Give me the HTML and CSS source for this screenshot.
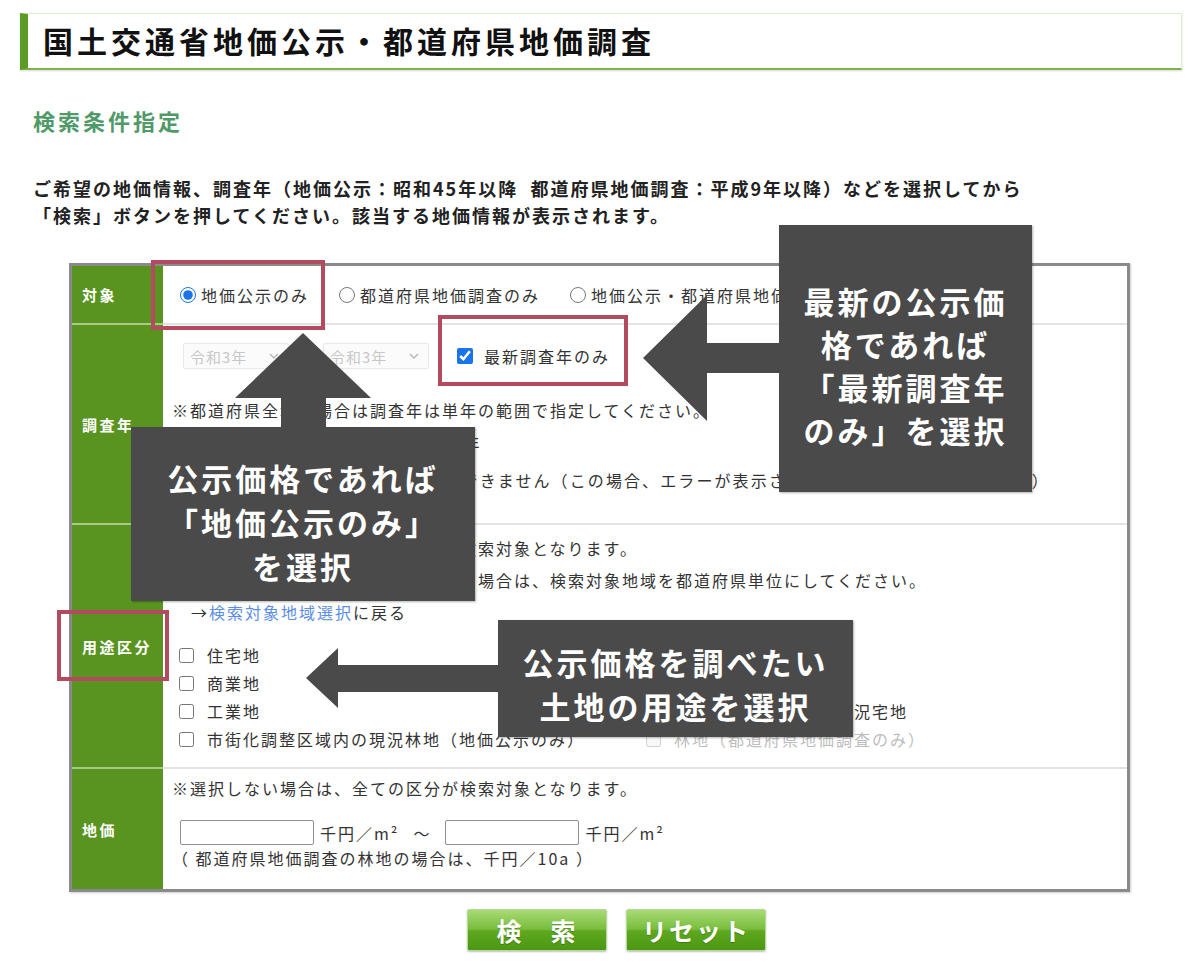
FILE: index.html
```html
<!DOCTYPE html>
<html lang="ja">
<head>
  <meta charset="UTF-8">
  <meta name="viewport" content="width=device-width, initial-scale=1.0">
  <title>国土交通省地価公示・都道府県地価調査</title>
  <link rel="stylesheet" href="styles.css">
</head>
<body>
<div class="page">
  <h1 class="page-title">国土交通省地価公示・都道府県地価調査</h1>
  <h2 class="section-title">検索条件指定</h2>
  <p class="lead">ご希望の地価情報、調査年（地価公示：昭和45年以降&nbsp; 都道府県地価調査：平成9年以降）などを選択してから<br>「検索」ボタンを押してください。該当する地価情報が表示されます。</p>

  <div class="search-table">
    <div class="row row-target">
      <div class="row-head">対象</div>
      <div class="row-body choices">
        <label class="choice"><input type="radio" name="target" checked>地価公示のみ</label>
        <label class="choice"><input type="radio" name="target">都道府県地価調査のみ</label>
        <label class="choice"><input type="radio" name="target">地価公示・都道府県地価調査</label>
      </div>
    </div>

    <div class="row row-year">
      <div class="row-head">調査年</div>
      <div class="row-body">
        <div class="year-line">
          <div class="select-wrap">
            <select disabled><option>令和3年</option></select>
            <svg class="chev" viewBox="0 0 10 6"><path d="M1 1l4 4 4-4" fill="none" stroke="#b5b5b5" stroke-width="1.4"/></svg>
          </div>
          <span class="tilde">～</span>
          <div class="select-wrap">
            <select disabled><option>令和3年</option></select>
            <svg class="chev" viewBox="0 0 10 6"><path d="M1 1l4 4 4-4" fill="none" stroke="#b5b5b5" stroke-width="1.4"/></svg>
          </div>
          <label class="latest"><input type="checkbox" checked>最新調査年のみ</label>
        </div>
        <p class="note note-first">※都道府県全域の場合は調査年は単年の範囲で指定してください。</p>
        <p class="note">※範囲で指定できる期間は最大で10年</p>
        <p class="note note-last">※林地は他の用途区分と同時に選択できません（この場合、エラーが表示され検索結果は出力されません。）</p>
      </div>
    </div>

    <div class="row row-use">
      <div class="row-head">用途区分</div>
      <div class="row-body">
        <p class="note note-top">※選択しない場合は、全ての区分が検索対象となります。</p>
        <p class="note">※用途区分のみで絞り込みを行いたい場合は、検索対象地域を都道府県単位にしてください。</p>
        <p class="note back-link">→<a href="#">検索対象地域選択</a>に戻る</p>
        <div class="use-list">
          <label class="use"><input type="checkbox">住宅地</label>
          <label class="use"><input type="checkbox">宅地見込地</label>
          <label class="use"><input type="checkbox">商業地</label>
          <label class="use"><input type="checkbox">準工業地</label>
          <label class="use"><input type="checkbox">工業地</label>
          <label class="use"><input type="checkbox">市街化調整区域内の現況宅地</label>
          <label class="use"><input type="checkbox">市街化調整区域内の現況林地（地価公示のみ）</label>
          <label class="use use-disabled"><input type="checkbox" disabled>林地（都道府県地価調査のみ）</label>
        </div>
      </div>
    </div>

    <div class="row row-price">
      <div class="row-head">地価</div>
      <div class="row-body">
        <p class="note note-top">※選択しない場合は、全ての区分が検索対象となります。</p>
        <div class="price-line">
          <input type="text" class="price-input">
          <span class="unit">千円／m²</span>
          <span class="range">～</span>
          <input type="text" class="price-input">
          <span class="unit">千円／m²</span>
        </div>
        <p class="price-note">（ 都道府県地価調査の林地の場合は、千円／10a ）</p>
      </div>
    </div>
  </div>

  <div class="buttons">
    <button class="btn">検　索</button>
    <button class="btn">リセット</button>
  </div>

  <!-- 注釈 -->
  <div class="mark mark-target"></div>
  <div class="mark mark-latest"></div>
  <div class="mark mark-use"></div>

  <svg class="arrows" viewBox="0 0 1200 967">
    <polygon points="303,333 371,398 326,398 326,428 281,428 281,398 235,398"/>
    <polygon points="643,358 707,295 707,343 780,343 780,373 707,373 707,421"/>
    <polygon points="306,678 338,648 338,665 499,665 499,692 338,692 338,708"/>
  </svg>

  <div class="callout callout-target">公示価格であれば<br>「地価公示のみ」<br>を選択</div>
  <div class="callout callout-latest">最新の公示価<br>格であれば<br>「最新調査年<br>のみ」を選択</div>
  <div class="callout callout-use">公示価格を調べたい<br>土地の用途を選択</div>
</div>
</body>
</html>
```

FILE: styles.css
```css
body {
  margin: 0;
  font-family: "Noto Sans CJK JP", "Noto Sans", sans-serif;
  color: #333;
  background: #fff;
}

.page {
  position: relative;
  width: 1200px;
  height: 967px;
  overflow: hidden;
}

.page-title {
  margin: 13px 18px 0 20px;
  height: 57px;
  box-sizing: border-box;
  border: 1px solid #dcf1cb;
  border-left: 8px solid #5c9b25;
  border-bottom: 2px solid #7cb44c;
  box-shadow: 0 1px 2px rgba(0, 0, 0, 0.15);
  padding-left: 15px;
  font-size: 30px;
  font-weight: bold;
  line-height: 53px;
  letter-spacing: 4px;
  color: #111;
}

.section-title {
  margin: 35px 0 0 33px;
  font-size: 22px;
  line-height: 30px;
  letter-spacing: 3px;
  color: #4f9a68;
}

.lead {
  margin: 40px 0 0 33px;
  font-size: 18px;
  line-height: 27px;
  letter-spacing: 2px;
  font-weight: bold;
  color: #222;
}

/* 検索テーブル */
.search-table {
  margin: 34px 0 0 69px;
  width: 1061px;
  box-sizing: border-box;
  border: 3px solid #8a8a8a;
  box-shadow: 1px 1px 2px rgba(0, 0, 0, 0.2);
  font-size: 16px;
  letter-spacing: 2px;
}

.row {
  display: flex;
  box-sizing: border-box;
}

.row-target { height: 57px; }
.row-year { height: 200px; }
.row-use { height: 244px; }
.row-price { height: 122px; }

.row-head {
  width: 91px;
  flex: none;
  box-sizing: border-box;
  background: #5a9420;
  color: #fff;
  font-weight: bold;
  font-size: 15px;
  letter-spacing: 2.5px;
  display: flex;
  align-items: center;
  padding-left: 10px;
}

.row-body {
  flex: 1;
  box-sizing: border-box;
  padding: 0 9px;
}

.row + .row .row-head {
  border-top: 2px solid #a9c98b;
}

.row + .row .row-body {
  border-top: 2px solid #e3e3e3;
}

.note {
  margin: 0;
  line-height: 32px;
  white-space: nowrap;
}

/* 対象 */
.choices {
  display: flex;
  align-items: center;
}

.choice {
  display: inline-flex;
  align-items: center;
}

.choice input {
  width: 16px;
  height: 16px;
  margin: 0 5px 0 30px;
  accent-color: #1a73e8;
}

.choice:first-child input {
  margin-left: 8px;
}

/* 調査年 */
.year-line {
  display: flex;
  align-items: center;
  margin-top: 18px;
  height: 26px;
}

.select-wrap {
  position: relative;
  margin-left: 11px;
}

.select-wrap + .tilde + .select-wrap {
  margin-left: 0;
}

.select-wrap select {
  appearance: none;
  -webkit-appearance: none;
  width: 106px;
  height: 26px;
  padding: 0 0 0 6px;
  border: 1px solid #e0e0e0;
  border-radius: 2px;
  background: #fafafa;
  color: #b0b0b0;
  font-family: inherit;
  font-size: 15px;
  letter-spacing: 1px;
}

.chev {
  position: absolute;
  right: 10px;
  top: 10px;
  width: 10px;
  height: 6px;
}

.tilde {
  width: 34px;
  text-align: center;
  color: #999;
}

.latest {
  display: inline-flex;
  align-items: center;
  margin-left: 28px;
}

.latest input {
  width: 16px;
  height: 16px;
  margin: 0 11px 0 0;
  accent-color: #1a73e8;
}

.note-first {
  margin-top: 25px;
  line-height: 33px;
}

.note-first + .note {
  line-height: 33px;
}

.note-last {
  margin-top: 4px;
  line-height: 33px;
  letter-spacing: 2.1px;
}

/* 用途区分 */
.note-top {
  padding-top: 7px;
}

.row-price .note-top {
  padding-top: 4px;
  line-height: 30px;
}

.back-link {
  padding-left: 19px;
}

.back-link a {
  color: #5b8ee6;
  text-decoration: none;
}

.use-list {
  display: grid;
  grid-template-columns: 467px auto;
  margin: 13px 0 0 7px;
}

.use {
  display: flex;
  align-items: center;
  height: 28px;
}

.use input {
  width: 15px;
  height: 15px;
  margin: 0 13px 0 0;
}

.use-disabled {
  color: #bdbdbd;
}

/* 地価 */
.price-line {
  display: flex;
  align-items: center;
  height: 25px;
  margin-top: 17px;
}

.price-input {
  width: 134px;
  height: 25px;
  box-sizing: border-box;
  border: 1px solid #8f8f8f;
  border-radius: 2px;
  margin-left: 8px;
}

.unit {
  margin-left: 6px;
}

.range {
  margin: 0 6px 0 14px;
}

.price-note {
  margin: 0;
  line-height: 26px;
}

/* ボタン */
.buttons {
  display: flex;
  gap: 19px;
  margin-top: 17px;
  padding-left: 467px;
}

.btn {
  width: 140px;
  height: 42px;
  border: 1px solid #b5d99a;
  border-radius: 2px;
  background: linear-gradient(#a9da76, #78bd3c 48%, #5fa820 52%, #4c9812);
  color: #fff;
  font-family: inherit;
  font-size: 25px;
  font-weight: bold;
  letter-spacing: 2px;
  text-shadow: 0 1px 1px rgba(0, 0, 0, 0.25);
  box-shadow: 0 1px 2px rgba(0, 0, 0, 0.25);
  padding: 0;
}

/* 注釈 */
.mark {
  position: absolute;
  box-sizing: border-box;
  border: 4px solid #b24b5f;
}

.mark-target { left: 151px; top: 260px; width: 174px; height: 70px; }
.mark-latest { left: 438px; top: 315px; width: 190px; height: 71px; }
.mark-use { left: 57px; top: 610px; width: 112px; height: 71px; }

.arrows {
  position: absolute;
  left: 0;
  top: 0;
  width: 1200px;
  height: 967px;
  fill: #4a4a4a;
}

.callout {
  position: absolute;
  box-sizing: border-box;
  background: #4a4a4a;
  color: #fff;
  font-size: 31px;
  font-weight: bold;
  letter-spacing: 3px;
  line-height: 44px;
  text-align: center;
  box-shadow: 1px 1px 2px rgba(0, 0, 0, 0.3);
}

.callout-target { left: 131px; top: 427px; width: 344px; height: 174px; padding-top: 29px; }
.callout-latest { left: 779px; top: 225px; width: 253px; height: 267px; padding-top: 54px; line-height: 43px; }
.callout-use { left: 498px; top: 620px; width: 355px; height: 117px; padding-top: 20px; }
```
